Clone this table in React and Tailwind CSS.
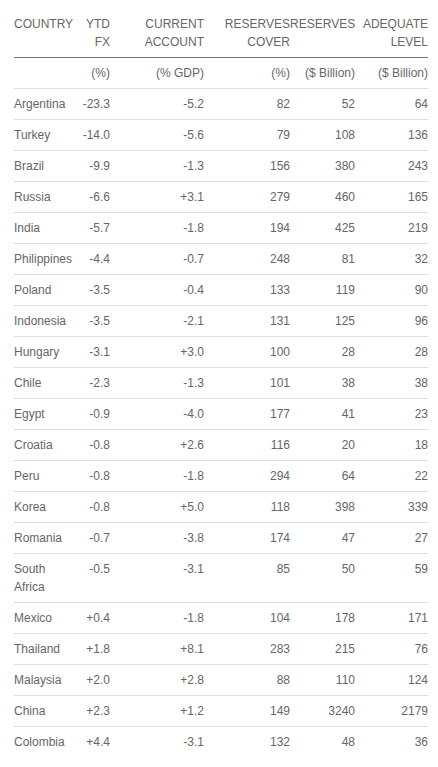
const rows = [
  ['Argentina', '-23.3', '-5.2', '82', '52', '64'],
  ['Turkey', '-14.0', '-5.6', '79', '108', '136'],
  ['Brazil', '-9.9', '-1.3', '156', '380', '243'],
  ['Russia', '-6.6', '+3.1', '279', '460', '165'],
  ['India', '-5.7', '-1.8', '194', '425', '219'],
  ['Philippines', '-4.4', '-0.7', '248', '81', '32'],
  ['Poland', '-3.5', '-0.4', '133', '119', '90'],
  ['Indonesia', '-3.5', '-2.1', '131', '125', '96'],
  ['Hungary', '-3.1', '+3.0', '100', '28', '28'],
  ['Chile', '-2.3', '-1.3', '101', '38', '38'],
  ['Egypt', '-0.9', '-4.0', '177', '41', '23'],
  ['Croatia', '-0.8', '+2.6', '116', '20', '18'],
  ['Peru', '-0.8', '-1.8', '294', '64', '22'],
  ['Korea', '-0.8', '+5.0', '118', '398', '339'],
  ['Romania', '-0.7', '-3.8', '174', '47', '27'],
  ['South Africa', '-0.5', '-3.1', '85', '50', '59'],
  ['Mexico', '+0.4', '-1.8', '104', '178', '171'],
  ['Thailand', '+1.8', '+8.1', '283', '215', '76'],
  ['Malaysia', '+2.0', '+2.8', '88', '110', '124'],
  ['China', '+2.3', '+1.2', '149', '3240', '2179'],
  ['Colombia', '+4.4', '-3.1', '132', '48', '36'],
];

const cell = 'py-[6px] align-top leading-[18px]';

export default function App() {
  return (
    <div className="bg-white w-[438px] min-h-[767px] pt-[9px] pl-[14px] pr-[10px] font-['Liberation_Sans',Arial,sans-serif] text-[12px] text-[#666666]">
      <table className="table-fixed w-[414px] border-collapse">
        <colgroup>
          <col className="w-[62px]" />
          <col className="w-[34px]" />
          <col className="w-[94px]" />
          <col className="w-[86px]" />
          <col className="w-[65px]" />
          <col className="w-[73px]" />
        </colgroup>
        <thead>
          <tr className="border-b border-[#6f6f6f]">
            <th className={`${cell} text-left font-normal`}>COUNTRY</th>
            <th className={`${cell} text-right font-normal`}>YTD FX</th>
            <th className={`${cell} text-right font-normal`}>CURRENT ACCOUNT</th>
            <th className={`${cell} text-right font-normal`}>RESERVES COVER</th>
            <th className={`${cell} text-right font-normal whitespace-nowrap`}>RESERVES</th>
            <th className={`${cell} text-right font-normal`}>ADEQUATE LEVEL</th>
          </tr>
        </thead>
        <tbody>
          <tr className="border-b border-[#dddddd]">
            <td className={cell}></td>
            <td className={`${cell} text-right`}>(%)</td>
            <td className={`${cell} text-right`}>(% GDP)</td>
            <td className={`${cell} text-right`}>(%)</td>
            <td className={`${cell} text-right whitespace-nowrap`}>($ Billion)</td>
            <td className={`${cell} text-right whitespace-nowrap`}>($ Billion)</td>
          </tr>
          {rows.map((r, i) => (
            <tr key={r[0]} className={i < rows.length - 1 ? 'border-b border-[#dddddd]' : ''}>
              <td className={`${cell} text-left`}>{r[0]}</td>
              {r.slice(1).map((v, j) => (
                <td key={j} className={`${cell} text-right whitespace-nowrap`}>{v}</td>
              ))}
            </tr>
          ))}
        </tbody>
      </table>
    </div>
  );
}
